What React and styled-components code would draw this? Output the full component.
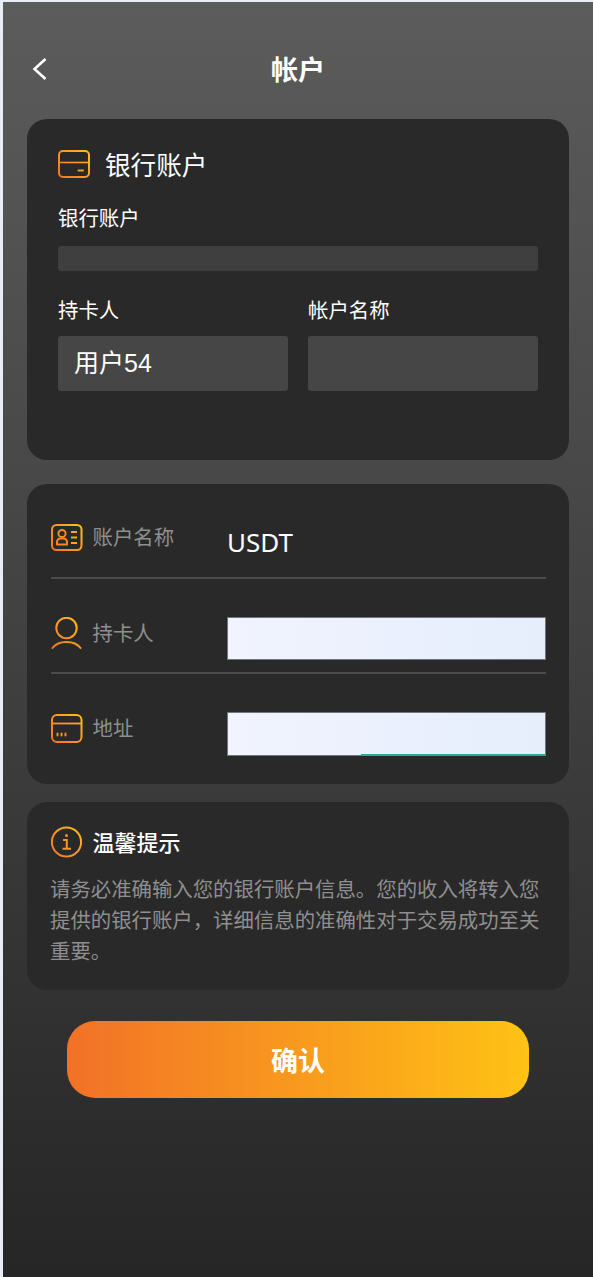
import React from 'react';
import styled, { createGlobalStyle } from 'styled-components';

const GlobalStyle = createGlobalStyle`
  html, body {
    margin: 0;
    padding: 0;
    background: #e9edf5;
  }
  body {
    padding: 2px 0 0 3px;
    font-family: "Liberation Sans", "Noto Sans CJK SC", sans-serif;
  }
  * { box-sizing: border-box; }
`;

// diagonal orange to yellow stroke shared by the outlined icons
const IconGradient = ({ id, w, h }) => (
  <defs>
    <linearGradient id={id} gradientUnits="userSpaceOnUse" x1="0" y1={h} x2={w} y2="0">
      <stop offset="0" stopColor="#f27127" />
      <stop offset="1" stopColor="#ffc215" />
    </linearGradient>
  </defs>
);

const CardIcon = () => (
  <Icon width="32" height="28" viewBox="0 0 32 28">
    <IconGradient id="g1" w={32} h={28} />
    <rect x="1" y="1" width="30" height="26" rx="4" fill="none" stroke="url(#g1)" strokeWidth="2" />
    <path d="M1 12.5H31" stroke="url(#g1)" strokeWidth="1.6" />
    <path d="M20.5 20.5H25" stroke="#f7a01e" strokeWidth="2" strokeLinecap="round" />
  </Icon>
);

const IdIcon = () => (
  <Icon width="32" height="27" viewBox="0 0 32 27">
    <IconGradient id="g2" w={32} h={27} />
    <rect x="1" y="1" width="29.5" height="25" rx="4.5" fill="none" stroke="url(#g2)" strokeWidth="2" />
    <circle cx="11" cy="9.5" r="3.6" fill="none" stroke="#f58a22" strokeWidth="2" />
    <path d="M6 20.5V18a3.5 3.5 0 0 1 3.5-3.5h3a3.5 3.5 0 0 1 3.5 3.5v2.5Z" fill="none" stroke="#f58a22" strokeWidth="2" strokeLinejoin="round" />
    <path d="M20 8H26M20 13.5H26M20 19H26" stroke="#faa81c" strokeWidth="1.8" />
  </Icon>
);

const UserIcon = () => (
  <Icon width="32" height="32" viewBox="0 0 32 32">
    <IconGradient id="g3" w={32} h={32} />
    <circle cx="15.5" cy="11" r="10.2" fill="none" stroke="url(#g3)" strokeWidth="2" />
    <path d="M1.5 31C4.5 27 9.5 25 15.5 25S26.5 27 29.5 31" fill="none" stroke="url(#g3)" strokeWidth="2" strokeLinecap="round" />
  </Icon>
);

const AddressIcon = () => (
  <Icon width="32" height="29" viewBox="0 0 32 29">
    <IconGradient id="g4" w={32} h={29} />
    <rect x="1" y="1" width="29.5" height="27" rx="5" fill="none" stroke="url(#g4)" strokeWidth="2" />
    <path d="M1 9.5H30.5" stroke="url(#g4)" strokeWidth="1.8" />
    <path d="M6.5 19.5V21.5M10.5 19.5V21.5M14.5 19.5V21.5" stroke="#f68f22" strokeWidth="2" strokeLinecap="round" />
  </Icon>
);

const InfoIcon = () => (
  <Icon width="32" height="32" viewBox="0 0 32 32">
    <IconGradient id="g5" w={32} h={32} />
    <circle cx="15.5" cy="16" r="14.6" fill="none" stroke="url(#g5)" strokeWidth="2" />
    <circle cx="15.5" cy="9.5" r="1.5" fill="#f7951f" />
    <path d="M12 14H15.8V22.5M11.5 22.8H20" fill="none" stroke="#f7951f" strokeWidth="2" />
  </Icon>
);

export default function App() {
  return (
    <Page>
      <GlobalStyle />
      <Header>
        <BackButton>
          <svg width="16" height="24" viewBox="0 0 16 24" fill="none">
            <path d="M13.5 2L2.5 12L13.5 22" stroke="#fff" strokeWidth="2.6" />
          </svg>
        </BackButton>
        <Title>帐户</Title>
      </Header>

      <Content>
        <Card $pad="31px 31px 69px">
          <CardHead>
            <CardIcon />
            <CardTitle>银行账户</CardTitle>
          </CardHead>
          <FieldLabel $top="24px">银行账户</FieldLabel>
          <SlimInput />
          <TwoCols>
            <div>
              <FieldLabel $top="23px">持卡人</FieldLabel>
              <TallInput>用户54</TallInput>
            </div>
            <div>
              <FieldLabel $top="23px">帐户名称</FieldLabel>
              <TallInput />
            </div>
          </TwoCols>
        </Card>

        <Card $pad="0 23px 28px 24px" $top="24px">
          <Row $line>
            <RowLabel $top="37px"><IdIcon /><span>账户名称</span></RowLabel>
            <RowValue>USDT</RowValue>
          </Row>
          <Row $line>
            <RowLabel $top="38px"><UserIcon /><span>持卡人</span></RowLabel>
            <Masked $h="43px" $top="38px" />
          </Row>
          <Row $last>
            <RowLabel $top="38px"><AddressIcon /><span>地址</span></RowLabel>
            <Masked $h="44px" $top="38px" $teal />
          </Row>
        </Card>

        <Card $pad="24px 24px 24px" $top="18px">
          <TipHead>
            <InfoIcon />
            <TipTitle>温馨提示</TipTitle>
          </TipHead>
          <TipText>请务必准确输入您的银行账户信息。您的收入将转入您提供的银行账户，详细信息的准确性对于交易成功至关重要。</TipText>
        </Card>

        <Confirm>确认</Confirm>
      </Content>
    </Page>
  );
}

const Page = styled.div`
  width: 590px;
  height: 1275px;
  background: linear-gradient(180deg, #5c5c5c 0%, #262626 100%);
  color: #fff;
  overflow: hidden;
`;

const Header = styled.header`
  position: relative;
  height: 117px;
  padding-top: 50px;
  display: flex;
  justify-content: center;
`;

const BackButton = styled.div`
  position: absolute;
  left: 29px;
  top: 55px;
  line-height: 0;
`;

const Title = styled.h1`
  margin: 0;
  font-size: 27px;
  line-height: 34px;
  font-weight: 700;
  font-family: "Noto Sans CJK SC", sans-serif;
`;

const Content = styled.main`
  padding: 0 24px;
  display: flex;
  flex-direction: column;
`;

const Card = styled.section`
  background: #292929;
  border-radius: 20px;
  padding: ${(p) => p.$pad};
  margin-top: ${(p) => p.$top || 0};
`;

const Icon = styled.svg`
  flex: none;
  display: block;
`;

const CardHead = styled.div`
  display: flex;
  align-items: center;
  gap: 15px;
  height: 28px;
`;

const CardTitle = styled.h2`
  margin: 0 0 2px;
  font-size: 25.6px;
  font-weight: 400;
  font-family: "Noto Sans CJK SC", sans-serif;
`;

const FieldLabel = styled.label`
  display: block;
  margin-top: ${(p) => p.$top};
  font-size: 20.4px;
  line-height: 30px;
  font-family: "Noto Sans CJK SC", sans-serif;
`;

const SlimInput = styled.div`
  height: 25px;
  margin-top: 14px;
  background: #3f3f3f;
  border-radius: 3px;
`;

const TwoCols = styled.div`
  display: grid;
  grid-template-columns: 230px 230px;
  gap: 20px;
`;

const TallInput = styled.div`
  height: 55px;
  margin-top: 12px;
  padding: 0 0 5px 16px;
  display: flex;
  align-items: center;
  background: #464646;
  border-radius: 3px;
  font-size: 25px;
  font-family: "Liberation Sans", "Noto Sans CJK SC", sans-serif;
`;

const Row = styled.div`
  height: ${(p) => (p.$last ? 'auto' : '95px')};
  display: grid;
  grid-template-columns: 176px 1fr;
  align-items: start;
  border-bottom: ${(p) => (p.$line ? '2px solid #4c4c4c' : 'none')};
`;

const RowLabel = styled.div`
  height: 32px;
  margin-top: ${(p) => p.$top};
  display: flex;
  align-items: center;
  gap: 9.5px;
  font-size: 20.4px;
  color: #8f8f8f;
  font-family: "Noto Sans CJK SC", sans-serif;

  span {
    margin-bottom: 2px;
  }
`;

const RowValue = styled.div`
  margin-top: 40px;
  font-size: 26px;
  line-height: 36px;
  font-family: "Noto Sans", sans-serif;
`;

const Masked = styled.div`
  position: relative;
  height: ${(p) => p.$h};
  margin-top: ${(p) => p.$top};
  border: 1px solid #73757c;
  background: linear-gradient(90deg, #f1f4fe 0%, #eaf0fd 55%, #e6eefc 100%);

  &::after {
    content: '';
    display: ${(p) => (p.$teal ? 'block' : 'none')};
    position: absolute;
    left: 42%;
    right: -1px;
    bottom: -1px;
    height: 2px;
    background: #35a497;
  }
`;

const TipHead = styled.div`
  display: flex;
  align-items: center;
  gap: 9.5px;
`;

const TipTitle = styled.h3`
  margin: 0 0 2px;
  font-size: 22px;
  line-height: 30px;
  font-weight: 500;
  font-family: "Noto Sans CJK SC", sans-serif;
`;

const TipText = styled.p`
  margin: 15px 0 0 -1px;
  font-size: 20.4px;
  line-height: 31px;
  color: #8f8f8f;
  font-family: "Noto Sans CJK SC", sans-serif;
`;

const Confirm = styled.button`
  align-self: center;
  width: 462px;
  height: 77px;
  margin-top: 31px;
  border: none;
  border-radius: 28px;
  background: linear-gradient(90deg, #f27127 0%, #ffc215 100%);
  color: #fff;
  font-size: 27px;
  font-weight: 700;
  font-family: "Noto Sans CJK SC", sans-serif;
`;
